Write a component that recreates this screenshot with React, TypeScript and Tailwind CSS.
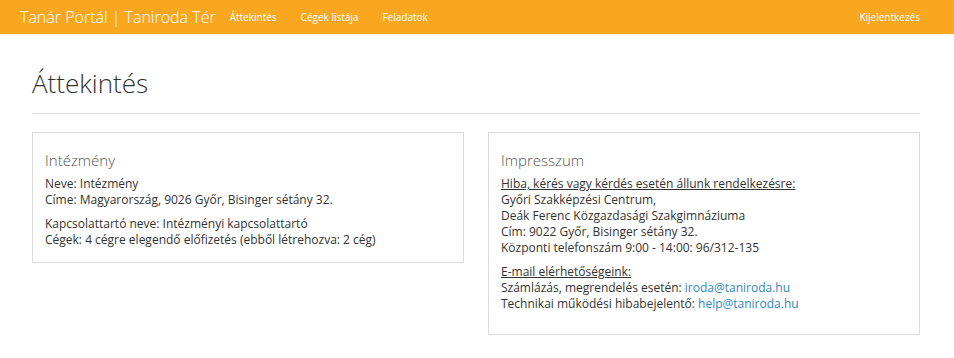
export default function App() {
  return (
    <div className="min-h-[358px] bg-white font-['Open_Sans',sans-serif] text-[#333]">
      {/* Navbar */}
      <nav className="flex h-[34px] items-center bg-[#f9a71e] pl-5 pr-[34px] text-white">
        <span className="mr-[14px] text-[16px] font-light leading-none">
          Tanár Portál | Taniroda Tér
        </span>
        <div className="flex gap-6 text-[10px]">
          <a href="#">Áttekintés</a>
          <a href="#">Cégek listája</a>
          <a href="#">Feladatok</a>
        </div>
        <a href="#" className="ml-auto text-[10px]">
          Kijelentkezés
        </a>
      </nav>

      <main className="pl-8 pr-[34px]">
        <h1 className="mt-[31px] pb-[12px] text-[26px] font-light leading-[36px] text-[#333]">
          Áttekintés
        </h1>
        <hr className="border-t border-[#ddd]" />

        <div className="mt-[18px] grid grid-cols-2 items-start gap-6">
          {/* Intézmény */}
          <section className="border border-[#ddd] px-3 pb-[14px] pt-[16px]">
            <h2 className="mb-[5px] text-[15px] font-light leading-[22px] text-[#555]">Intézmény</h2>
            <div className="text-[12px] leading-4">
              <p>Neve: Intézmény</p>
              <p>Címe: Magyarország, 9026 Győr, Bisinger sétány 32.</p>
              <p className="mt-2">Kapcsolattartó neve: Intézményi kapcsolattartó</p>
              <p>Cégek: 4 cégre elegendő előfizetés (ebből létrehozva: 2 cég)</p>
            </div>
          </section>

          {/* Impresszum */}
          <section className="border border-[#ddd] px-3 pb-[22px] pt-[16px]">
            <h2 className="mb-[5px] text-[15px] font-light leading-[22px] text-[#555]">Impresszum</h2>
            <div className="text-[12px] leading-4">
              <p className="underline">Hiba, kérés vagy kérdés esetén állunk rendelkezésre:</p>
              <p>Győri Szakképzési Centrum,</p>
              <p>Deák Ferenc Közgazdasági Szakgimnáziuma</p>
              <p>Cím: 9022 Győr, Bisinger sétány 32.</p>
              <p>Központi telefonszám 9:00 - 14:00: 96/312-135</p>
              <p className="mt-2 underline">E-mail elérhetőségeink:</p>
              <p>
                Számlázás, megrendelés esetén:{' '}
                <a href="#" className="text-[#2f86c1]">iroda@taniroda.hu</a>
              </p>
              <p>
                Technikai működési hibabejelentő:{' '}
                <a href="#" className="text-[#2f86c1]">help@taniroda.hu</a>
              </p>
            </div>
          </section>
        </div>
      </main>
    </div>
  )
}
